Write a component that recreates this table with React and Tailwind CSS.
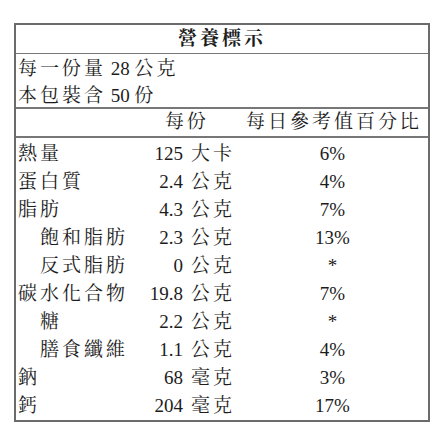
const FONT = "font-['Liberation_Serif','Noto_Serif_CJK_TC','Noto_Sans_CJK_TC',serif]";

const rows = [
  { name: "熱量", amt: "125", unit: "大卡", pct: "6%" },
  { name: "蛋白質", amt: "2.4", unit: "公克", pct: "4%" },
  { name: "脂肪", amt: "4.3", unit: "公克", pct: "7%" },
  { name: "飽和脂肪", amt: "2.3", unit: "公克", pct: "13%", sub: true },
  { name: "反式脂肪", amt: "0", unit: "公克", pct: "*", sub: true },
  { name: "碳水化合物", amt: "19.8", unit: "公克", pct: "7%" },
  { name: "糖", amt: "2.2", unit: "公克", pct: "*", sub: true },
  { name: "膳食纖維", amt: "1.1", unit: "公克", pct: "4%", sub: true },
  { name: "鈉", amt: "68", unit: "毫克", pct: "3%" },
  { name: "鈣", amt: "204", unit: "毫克", pct: "17%" },
];

const Cjk = ({ children }) => <span className="tracking-[3px]">{children}</span>;

export default function App() {
  return (
    <div className={`w-[442px] h-[442px] bg-white pt-[23px] pl-[14px] text-[19px] text-[#1c1c1c] ${FONT}`}>
      <div className="w-[416px] border-2 border-[#6b6b6b]">
        <div className="h-[29px] flex items-center justify-center font-bold border-b border-[#777]">
          <Cjk>營養標示</Cjk>
        </div>
        <div className="h-[55px] flex flex-col justify-center pl-[2px] pt-[2px] border-b-2 border-[#777] leading-[27px]">
          <div><Cjk>每一份量</Cjk> 28 <Cjk>公克</Cjk></div>
          <div><Cjk>本包裝含</Cjk> 50 <Cjk>份</Cjk></div>
        </div>
        <div className="h-[29px] flex items-center border-b-2 border-[#777]">
          <div className="w-[193px] text-right"><Cjk>每份</Cjk></div>
          <div className="flex-1 text-right pr-[6px]"><Cjk>每日參考值百分比</Cjk></div>
        </div>
        <div className="pt-[2px]">
          {rows.map((r) => (
            <div key={r.name} className="h-[28px] flex items-center">
              <div className={`w-[114px] ${r.sub ? "pl-[24px]" : "pl-[2px]"}`}>
                <Cjk>{r.name}</Cjk>
              </div>
              <div className="w-[53px] text-right">{r.amt}</div>
              <div className="w-[70px] pl-[8px]"><Cjk>{r.unit}</Cjk></div>
              <div className="flex-1 text-center pr-[16px]">{r.pct}</div>
            </div>
          ))}
        </div>
      </div>
    </div>
  );
}
